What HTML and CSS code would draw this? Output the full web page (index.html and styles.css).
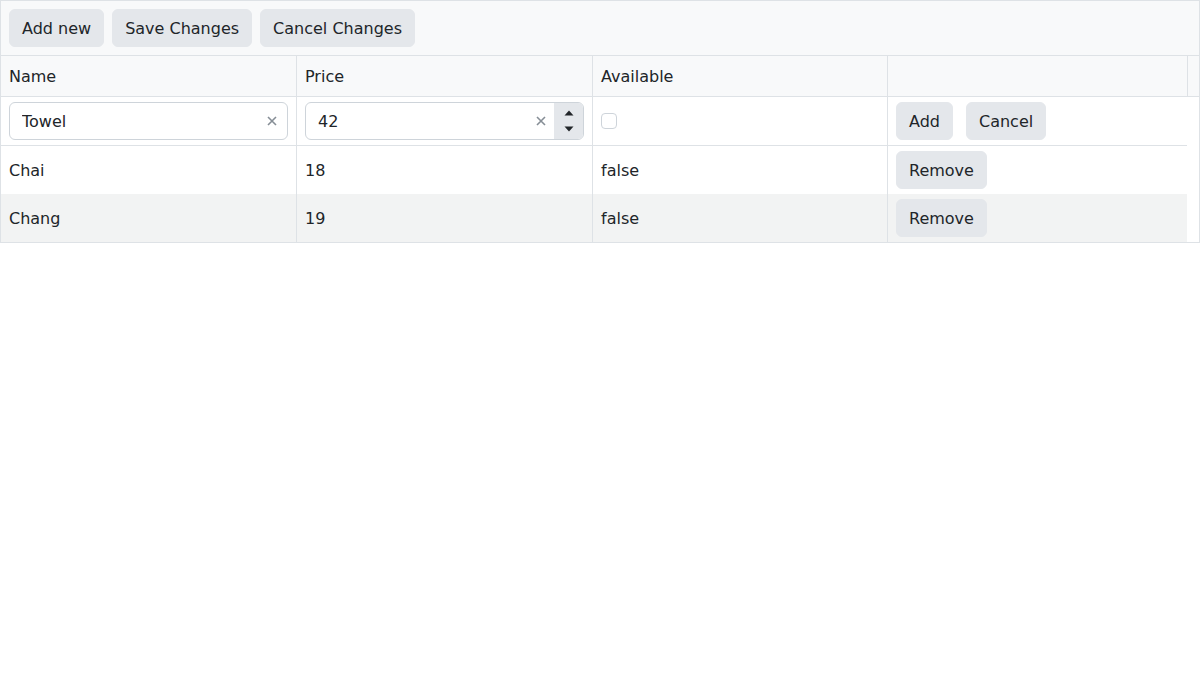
FILE: index.html
```html
<!DOCTYPE html>
<html>
<head>
<meta charset="utf-8">
<link rel="stylesheet" href="styles.css">
</head>
<body>
<div class="grid">
  <div class="toolbar">
    <button class="btn">Add new</button>
    <button class="btn">Save Changes</button>
    <button class="btn">Cancel Changes</button>
  </div>
  <div class="grid-header">
    <table class="tbl head">
      <colgroup><col class="c1"><col class="c2"><col class="c3"><col class="c4"></colgroup>
      <tr><th>Name</th><th>Price</th><th>Available</th><th></th></tr>
    </table>
  </div>
  <div class="grid-body">
    <table class="tbl body">
      <colgroup><col class="c1"><col class="c2"><col class="c3"><col class="c4"></colgroup>
      <tr class="edit-row">
        <td>
          <span class="textbox">
            <input class="tb-input" value="Towel">
            <span class="clear"><svg width="12" height="12" viewBox="0 0 12 12"><path d="M2 2 L10 10 M10 2 L2 10" stroke="#868e96" stroke-width="1.6" fill="none"/></svg></span>
          </span>
        </td>
        <td>
          <span class="textbox numeric">
            <input class="tb-input" value="42">
            <span class="clear"><svg width="12" height="12" viewBox="0 0 12 12"><path d="M2 2 L10 10 M10 2 L2 10" stroke="#868e96" stroke-width="1.6" fill="none"/></svg></span>
            <span class="spinner">
              <span class="spin up"><svg width="10" height="6" viewBox="0 0 10 6"><path d="M0.5 5.5 L5 0.5 L9.5 5.5 Z" fill="#212529"/></svg></span>
              <span class="spin down"><svg width="10" height="6" viewBox="0 0 10 6"><path d="M0.5 0.5 L5 5.5 L9.5 0.5 Z" fill="#212529"/></svg></span>
            </span>
          </span>
        </td>
        <td><input type="checkbox" class="check"></td>
        <td><button class="btn">Add</button><button class="btn cmd-gap">Cancel</button></td>
      </tr>
      <tr><td class="txt">Chai</td><td class="txt">18</td><td class="txt">false</td><td><button class="btn">Remove</button></td></tr>
      <tr class="alt"><td class="txt">Chang</td><td class="txt">19</td><td class="txt">false</td><td><button class="btn">Remove</button></td></tr>
    </table>
  </div>
</div>
</body>
</html>
```

FILE: styles.css
```css
html, body {
  margin: 0;
  padding: 0;
  background: #ffffff;
}
body {
  font-family: "DejaVu Sans", sans-serif;
  font-size: 16px;
  line-height: 24px;
  color: #212529;
}
.grid {
  width: 1200px;
  box-sizing: border-box;
  border: 1px solid #dee2e6;
}
.toolbar {
  display: flex;
  gap: 8px;
  padding: 8px;
  background: #f8f9fa;
  border-bottom: 1px solid #dee2e6;
}
.btn {
  font-family: "DejaVu Sans", sans-serif;
  font-size: 16px;
  line-height: 24px;
  color: #212529;
  background: #e4e7eb;
  border: 1px solid #e4e7eb;
  border-radius: 6px;
  padding: 7px 12px 5px;
  margin: 0;
  height: 38px;
  box-sizing: border-box;
  cursor: pointer;
  vertical-align: middle;
}
.cmd-gap {
  margin-left: 13px;
}
.grid-header {
  background: #f8f9fa;
  padding-right: 11px;
  border-bottom: 1px solid #dee2e6;
}
.tbl {
  border-collapse: separate;
  border-spacing: 0;
  table-layout: fixed;
  width: 1186px;
}
.tbl.head {
  width: 1187px;
  border-right: 1px solid #dee2e6;
}
.c1 { width: 295px; }
.c2 { width: 296px; }
.c3 { width: 295px; }
.c4 { width: 300px; }
.tbl th {
  font-weight: normal;
  text-align: left;
  padding: 9px 8px 7px;
  height: 24px;
  line-height: 24px;
}
.tbl th + th, .tbl td + td {
  border-left: 1px solid #dee2e6;
}
.tbl td {
  height: 48px;
  padding: 0 8px;
  box-sizing: border-box;
  vertical-align: middle;
}
.tbl td.txt {
  padding-top: 2px;
}
.edit-row td {
  height: 49px;
  border-bottom: 1px solid #dee2e6;
}
.alt td {
  background: #f2f3f3;
}
.textbox {
  display: flex;
  align-items: center;
  height: 38px;
  box-sizing: border-box;
  border: 1px solid #ced4da;
  border-radius: 6px;
  background: #ffffff;
  overflow: hidden;
}
.tb-input {
  flex: 1;
  min-width: 0;
  border: 0;
  outline: none;
  background: transparent;
  font-family: "DejaVu Sans", sans-serif;
  font-size: 16px;
  line-height: 24px;
  color: #212529;
  padding: 7px 12px 5px;
  margin: 0;
}
.clear {
  width: 24px;
  height: 24px;
  display: flex;
  align-items: center;
  justify-content: center;
  margin-right: 3px;
}
.numeric .clear {
  margin-right: 1px;
}
.spinner {
  display: flex;
  flex-direction: column;
  width: 29px;
  height: 36px;
  background: #e4e7eb;
}
.spin {
  flex: 1;
  display: flex;
  align-items: center;
  justify-content: center;
}
.spin.up {
  padding-top: 2px;
}
.spin.down {
  padding-bottom: 2px;
}
.check {
  appearance: none;
  -webkit-appearance: none;
  width: 16px;
  height: 16px;
  margin: 0;
  border: 1px solid #ced4da;
  border-radius: 4px;
  background: #ffffff;
  box-sizing: border-box;
  display: block;
}
```
